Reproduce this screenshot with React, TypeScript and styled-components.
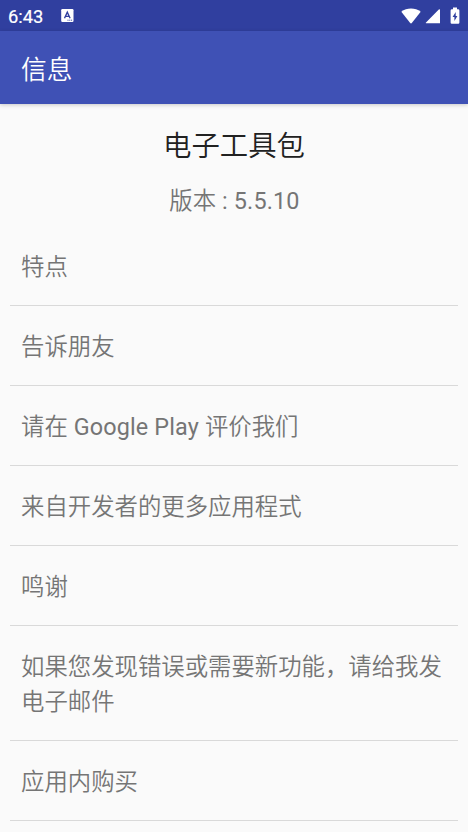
import React from "react";
import styled, { createGlobalStyle } from "styled-components";

const GlobalStyle = createGlobalStyle`
  * { box-sizing: border-box; }
  body { margin: 0; background: #fafafa; overflow: hidden; }
`;
const Screen = styled.main`
  width: 468px; height: 832px; overflow: hidden; display: flex; flex-direction: column;
  background: #fafafa; color: #757575;
  font-family: Roboto, "Noto Sans CJK SC DemiLight", "Noto Sans CJK SC", sans-serif; font-weight: 350;
`;
const StatusBar = styled.header`
  flex: none; height: 31px; padding: 0 8px; display: flex; align-items: flex-start;
  background: #303f9f; color: #fff; font-size: 18.3px;
`;
const Clock = styled.span`font-weight: 400; line-height: 33px; width: 53px; -webkit-text-stroke: 0.2px #fff;`;
const NotificationIcon = styled.svg`margin-top: 9px;`;
const StatusIcons = styled.div`margin: 6.5px 0 0 auto; display: flex; align-items: center;`;
const Signal = styled.svg`margin: 0 9px 0 4px;`;
const AppBar = styled.div`
  flex: none; height: 73px; padding: 4px 21px 0; display: flex; align-items: center;
  background: #3f51b5; color: #fff; font-size: 25.7px; line-height: 38px;
  box-shadow: 0 1px 4px rgba(0,0,0,.2);
`;
const About = styled.section`flex: none; height: 122px; padding-top: 22px; text-align: center;`;
const Title = styled.h1`margin: 0; padding-top: 1px; color: #212121; font-size: 28.4px; font-weight: inherit; line-height: 40px;`;
const Version = styled.p`margin: 16px 0 0; padding-left: 1px; font-size: 23.4px; line-height: 36px;`;
const Latin = styled.span`font-weight: 400; letter-spacing: 0.15px;`;
const List = styled.ul`list-style: none; margin: 0; padding: 0 10px;`;
const Item = styled.li`
  min-height: 80px; padding: 24px 11px 20px; border-bottom: 1px solid #d9d9d9;
  font-size: 23.38px; line-height: 35px;
`;

const items = [
  "特点",
  "告诉朋友",
  <>请在<Latin> Google Play </Latin>评价我们</>,
  "来自开发者的更多应用程式",
  "鸣谢",
  "如果您发现错误或需要新功能，请给我发电子邮件",
  "应用内购买",
];

export default function App() {
  return (
    <Screen lang="zh-CN">
      <GlobalStyle />
      <StatusBar>
        <Clock>6:43</Clock>
        <NotificationIcon width="13" height="13" viewBox="0 0 13 13">
          <rect x="0.2" width="12.3" height="13" rx="1.2" fill="#fff" />
          <path d="M3.5 9.2 6.3 3.2l2.8 6M4.5 7.4h3.6" fill="none" stroke="#303f9f" strokeWidth="1.4" />
          <path d="M6.5 11.2h1m.8 0h1m.8 0h1" stroke="#303f9f" />
        </NotificationIcon>
        <StatusIcons>
          <svg width="20" height="17" viewBox="0 0 20 17"><path d="M.3 4.7C5.8.3 14.2.3 19.7 4.7L11 15.8q-1 1.2-2 0Z" fill="#fff" /></svg>
          <Signal width="16" height="17" viewBox="0 0 16 17"><path d="M15 3v13.2H1.2Q.2 16.2 1 15.4L13.8 2.6Q15 1.5 15 3Z" fill="#fff" /></Signal>
          <svg width="10" height="17" viewBox="0 0 10 17"><path d="M3 .5h4v1.7h1q1.4 0 1.4 1.2v12.1q0 1.2-1.2 1.2H1.8Q.6 16.7.6 15.5V3.4Q.6 2.2 2 2.2h1Z" fill="#fff" /><path d="M5.7 5 2.6 10.1h1.8V14l3-5.1H5.7Z" fill="#303f9f" /></svg>
        </StatusIcons>
      </StatusBar>
      <AppBar>信息</AppBar>
      <About><Title>电子工具包</Title><Version>版本<Latin> : 5.5.10</Latin></Version></About>
      <List>{items.map((item, index) => <Item key={index}>{item}</Item>)}</List>
    </Screen>
  );
}
